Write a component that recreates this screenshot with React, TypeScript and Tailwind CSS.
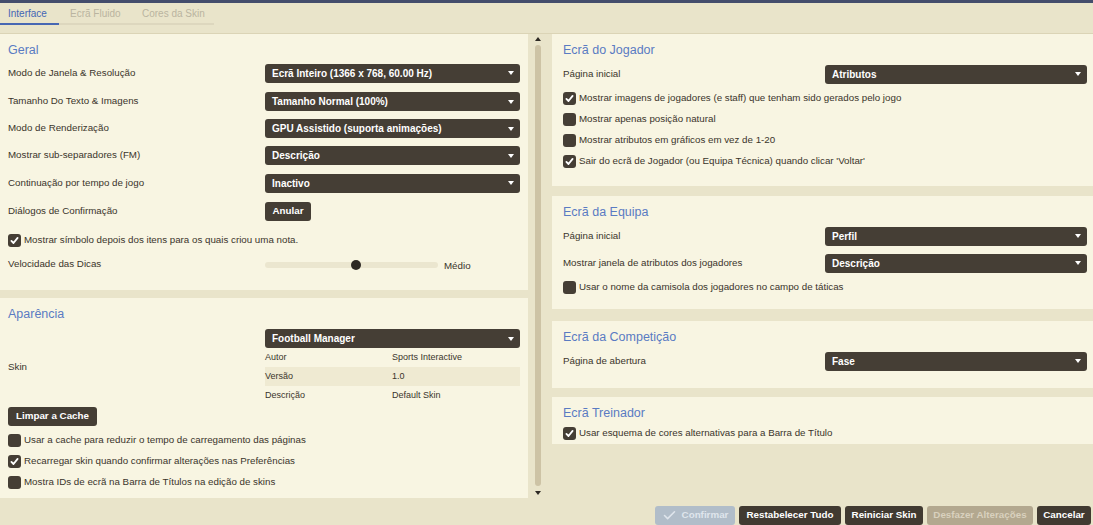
import { Check } from "lucide-react";

const Arrow = ({ up = false, color = "#ffffff" }: { up?: boolean; color?: string }) => (
  <svg width="6" height="4" viewBox="0 0 6 4" className="shrink-0">
    <path d={up ? "M0 4 L3 0 L6 4 Z" : "M0 0 L6 0 L3 4 Z"} fill={color} />
  </svg>
);

function Dropdown({ value }: { value: string }) {
  return (
    <div className="h-[19px] w-full rounded-[3px] bg-[#453e35] flex items-center justify-between pl-[7px] pr-[6px] text-[10px] font-bold text-white">
      <span>{value}</span>
      <Arrow />
    </div>
  );
}

function Checkbox({ checked }: { checked: boolean }) {
  return (
    <div className="w-[13px] h-[13px] rounded-[3px] bg-[#453e35] flex items-center justify-center shrink-0">
      {checked && (
        <svg width="13" height="13" viewBox="0 0 13 13">
          <path
            d="M3.4 6.9 L5.5 9 L9.6 3.9"
            fill="none"
            stroke="white"
            strokeWidth={1.8}
            strokeLinecap="round"
            strokeLinejoin="round"
          />
        </svg>
      )}
    </div>
  );
}

function CheckRow({ checked, label, className = "h-[21px]" }: { checked: boolean; label: string; className?: string }) {
  return (
    <div className={`flex items-center gap-[3px] ${className}`}>
      <Checkbox checked={checked} />
      <span>{label}</span>
    </div>
  );
}

function Heading({ children }: { children: string }) {
  return <div className="h-[16px] leading-[16px] text-[12.5px] text-[#5a7bc2]">{children}</div>;
}

// left column row: label + control starting at x 265
function LeftRow({ label, children, className }: { label: string; children: React.ReactNode; className: string }) {
  return (
    <div className={`flex items-center ${className}`}>
      <div className="w-[257px]">{label}</div>
      <div className="w-[255px]">{children}</div>
    </div>
  );
}

// right column row: label + control starting at x 825
function RightRow({ label, value, className }: { label: string; value: string; className: string }) {
  return (
    <div className={`flex items-center ${className}`}>
      <div className="w-[262px]">{label}</div>
      <div className="w-[262px]">
        <Dropdown value={value} />
      </div>
    </div>
  );
}

function Button({ label, className }: { label: string; className: string }) {
  return (
    <div className={`h-[19px] rounded-[3px] flex items-center justify-center text-[9.8px] font-bold ${className}`}>
      {label}
    </div>
  );
}

export default function App() {
  return (
    <div className="w-[1093px] h-[525px] overflow-hidden flex flex-col bg-[#e9e4ca] text-[9.75px] text-[#3a342b] font-['Liberation_Sans',Arial,sans-serif]">
      <div className="h-[3px] bg-[#444d6c]" />

      {/* tabs */}
      <div className="h-[31px] border-b border-[#dbd4b6] flex items-start text-[10px]">
        <div className="w-[59px] h-[22px] pl-[8px] flex items-center border-b-2 border-[#4767b3] text-[#4466b5]">Interface</div>
        <div className="w-[71px] h-[22px] pl-[11px] flex items-center border-b-2 border-[#ddd7be] text-[#bab4a0]">Ecrã Fluido</div>
        <div className="w-[84px] h-[22px] pl-[12px] flex items-center border-b-2 border-[#ddd7be] text-[#bab4a0]">Cores da Skin</div>
      </div>

      <div className="h-[464px] flex">
        {/* left column */}
        <div className="w-[528px] flex flex-col">
          <div className="h-[256px] bg-[#f8f5e2] pt-[8px] pl-[8px]">
            <Heading>Geral</Heading>
            <LeftRow label="Modo de Janela & Resolução" className="h-[30px]">
              <Dropdown value="Ecrã Inteiro (1366 x 768, 60.00 Hz)" />
            </LeftRow>
            <LeftRow label="Tamanho Do Texto & Imagens" className="h-[27px]">
              <Dropdown value="Tamanho Normal (100%)" />
            </LeftRow>
            <LeftRow label="Modo de Renderização" className="h-[27px]">
              <Dropdown value="GPU Assistido (suporta animações)" />
            </LeftRow>
            <LeftRow label="Mostrar sub-separadores (FM)" className="h-[27px]">
              <Dropdown value="Descrição" />
            </LeftRow>
            <LeftRow label="Continuação por tempo de jogo" className="h-[28px]">
              <Dropdown value="Inactivo" />
            </LeftRow>
            <LeftRow label="Diálogos de Confirmação" className="h-[29px]">
              <Button label="Anular" className="w-[46px] bg-[#453e35] text-white" />
            </LeftRow>
            <CheckRow checked label="Mostrar símbolo depois dos itens para os quais criou uma nota." className="h-[29px]" />
            <div className="h-[19px] flex items-center">
              <div className="w-[257px]">Velocidade das Dicas</div>
              <div className="w-[173px] h-[6px] rounded-full bg-[#ebe6cf] relative">
                <div className="absolute left-[86px] top-[-2px] w-[10px] h-[10px] rounded-full bg-[#2d2924]" />
              </div>
              <span className="ml-[6px] mt-[3px]">Médio</span>
            </div>
          </div>

          <div className="mt-[8px] h-[200px] bg-[#f8f5e2] pt-[8px] pl-[8px]">
            <Heading>Aparência</Heading>
            <div className="mt-[7px] flex items-center">
              <div className="w-[257px]">Skin</div>
              <div className="w-[255px]">
                <Dropdown value="Football Manager" />
                {[
                  ["Autor", "Sports Interactive", ""],
                  ["Versão", "1.0", "bg-[#efead2]"],
                  ["Descrição", "Default Skin", ""],
                ].map(([k, v, bg]) => (
                  <div key={k} className={`h-[19px] flex items-center text-[9px] ${bg}`}>
                    <div className="w-[127px]">{k}</div>
                    <div>{v}</div>
                  </div>
                ))}
              </div>
            </div>
            <Button label="Limpar a Cache" className="mt-[2px] w-[89px] bg-[#453e35] text-white" />
            <div className="mt-[4px]">
              <CheckRow checked={false} label="Usar a cache para reduzir o tempo de carregamento das páginas" />
              <CheckRow checked label="Recarregar skin quando confirmar alterações nas Preferências" />
              <CheckRow checked={false} label="Mostra IDs de ecrã na Barra de Títulos na edição de skins" />
            </div>
          </div>
        </div>

        {/* scrollbar */}
        <div className="w-[24px] flex flex-col items-start pl-[7px] pt-[3px]">
          <Arrow up color="#2d2924" />
          <div className="mt-[4px] w-[6px] h-[441px] rounded-full bg-[#cdc3a5]" />
          <div className="mt-[5px]">
            <Arrow color="#2d2924" />
          </div>
        </div>

        {/* right column */}
        <div className="flex-1 flex flex-col">
          <div className="h-[152px] bg-[#f8f5e2] pt-[8px] pl-[11px]">
            <Heading>Ecrã do Jogador</Heading>
            <RightRow label="Página inicial" value="Atributos" className="mt-[6px] h-[20px]" />
            <div className="mt-[4px]">
              <CheckRow checked label="Mostrar imagens de jogadores (e staff) que tenham sido gerados pelo jogo" />
              <CheckRow checked={false} label="Mostrar apenas posição natural" />
              <CheckRow checked={false} label="Mostrar atributos em gráficos em vez de 1-20" />
              <CheckRow checked label="Sair do ecrã de Jogador (ou Equipa Técnica) quando clicar 'Voltar'" />
            </div>
          </div>

          <div className="mt-[10px] h-[113px] bg-[#f8f5e2] pt-[8px] pl-[11px]">
            <Heading>Ecrã da Equipa</Heading>
            <RightRow label="Página inicial" value="Perfil" className="mt-[6px] h-[20px]" />
            <RightRow label="Mostrar janela de atributos dos jogadores" value="Descrição" className="mt-[7px] h-[20px]" />
            <CheckRow checked={false} label="Usar o nome da camisola dos jogadores no campo de táticas" className="mt-[4px] h-[20px]" />
          </div>

          <div className="mt-[12px] h-[67px] bg-[#f8f5e2] pt-[8px] pl-[11px]">
            <Heading>Ecrã da Competição</Heading>
            <RightRow label="Página de abertura" value="Fase" className="mt-[6px] h-[20px]" />
          </div>

          <div className="mt-[9px] h-[47px] bg-[#f8f5e2] pt-[8px] pl-[11px]">
            <Heading>Ecrã Treinador</Heading>
            <CheckRow checked label="Usar esquema de cores alternativas para a Barra de Título" className="mt-[2px] h-[20px]" />
          </div>
        </div>
      </div>

      {/* bottom buttons */}
      <div className="h-[27px] pt-[8px] pr-[2px] flex justify-end gap-[4px]">
        <div className="w-[80px] h-[19px] rounded-[3px] bg-[#b1bdc9] text-[#dfe5ec] flex items-center justify-center gap-[5px] text-[9.8px] font-bold">
          <Check size={15} strokeWidth={2.5} />
          <span>Confirmar</span>
        </div>
        <Button label="Restabelecer Tudo" className="w-[102px] bg-[#413a31] text-white" />
        <Button label="Reiniciar Skin" className="w-[78px] bg-[#413a31] text-white" />
        <Button label="Desfazer Alterações" className="w-[106px] bg-[#b3a88f] text-[#d9d1be]" />
        <Button label="Cancelar" className="w-[54px] bg-[#413a31] text-white" />
      </div>
    </div>
  );
}
